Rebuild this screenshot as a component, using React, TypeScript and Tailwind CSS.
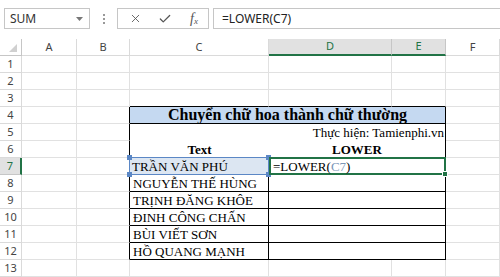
import { X, Check } from "lucide-react";

const cols = ["A", "B", "C", "D", "E", "F"];
const names = ["NGUYỄN THẾ HÙNG", "TRỊNH ĐĂNG KHÔE", "ĐINH CÔNG CHẤN", "BÙI VIẾT SƠN", "HỒ QUANG MẠNH"];

const serif = { fontFamily: '"Liberation Serif", "Times New Roman", serif' };

function RowHead({ n, active }: { n: number; active?: boolean }) {
  return (
    <div
      className={
        active
          ? "flex items-center justify-center bg-[#e1e1e1] text-[#217346] border-b border-[#c6c6c6] border-r-2 border-r-[#217346] text-[11px]"
          : "flex items-center justify-center text-[#444] border-b border-r border-[#dadada] text-[11px]"
      }
    >
      {n}
    </div>
  );
}

function G({ className = "" }: { className?: string }) {
  return <div className={"border-b border-r border-[#e1e1e1] " + className} />;
}

function Handle({ className }: { className: string }) {
  return <div className={"absolute w-[5px] h-[5px] " + className} />;
}

export default function App() {
  return (
    <div
      className="w-[500px] h-[277px] overflow-hidden bg-white text-black"
      style={{ fontFamily: '"Noto Sans", "Open Sans", sans-serif' }}
    >
      {/* formula bar */}
      <div className="flex items-start pt-[8px] pl-[4px] h-[39px]">
        <div className="w-[86px] h-[21px] border border-[#c6c6c6] flex items-center justify-between pl-[5px] pr-[6px] text-[12px] text-[#333]">
          <span>SUM</span>
          <svg width="7" height="4" viewBox="0 0 7 4">
            <path d="M0 0 L7 0 L3.5 4 Z" fill="#777" />
          </svg>
        </div>
        <div className="w-[27px] h-[21px] flex flex-col items-center justify-center gap-[2px]">
          <div className="w-[2px] h-[2px] bg-[#999]" />
          <div className="w-[2px] h-[2px] bg-[#999]" />
          <div className="w-[2px] h-[2px] bg-[#999]" />
        </div>
        <div className="w-[92px] h-[21px] border border-[#c6c6c6] flex items-center text-[#555]">
          <div className="w-[30px] flex justify-center ml-[2px]">
            <X size={13} strokeWidth={1.6} />
          </div>
          <div className="w-[30px] flex justify-center">
            <Check size={14} strokeWidth={2.2} />
          </div>
          <div className="w-[28px] flex justify-center items-end" style={serif}>
            <span className="italic text-[14px] leading-none">f</span>
            <span className="italic text-[9px] leading-none">x</span>
          </div>
        </div>
        <div className="ml-[4px] flex-1 h-[21px] border border-r-0 border-[#c6c6c6] flex items-center pl-[8px] text-[12px] text-[#222]">
          =LOWER(C7)
        </div>
      </div>

      {/* sheet */}
      <div className="grid grid-cols-[22px_55px_53px_139px_123px_54px_54px] auto-rows-[17px]">
        {/* header */}
        <div className="relative border-b border-r border-[#c6c6c6]">
          <svg className="absolute right-[4px] bottom-[3px]" width="8" height="8" viewBox="0 0 8 8">
            <path d="M8 0 L8 8 L0 8 Z" fill="#d0d0d0" />
          </svg>
        </div>
        {cols.map((c) => {
          const sel = c === "D" || c === "E";
          return (
            <div
              key={c}
              className={
                sel
                  ? "flex items-center justify-center bg-[#e1e1e1] text-[#217346] border-r border-[#c6c6c6] border-b-2 border-b-[#217346] text-[11px]"
                  : "flex items-center justify-center text-[#444] border-r border-b border-[#dadada] text-[11px]"
              }
            >
              {c}
            </div>
          );
        })}

        {/* rows 1-2 */}
        {[1, 2].map((r) => (
          <div key={r} className="contents">
            <RowHead n={r} />
            <G />
            <G />
            <G />
            <G />
            <G />
            <G />
          </div>
        ))}

        {/* row 3 */}
        <RowHead n={3} />
        <G />
        <G />
        <div className="border-r border-[#e1e1e1] border-b border-b-black" />
        <div className="border-r border-[#e1e1e1] border-b border-b-black" />
        <div className="border-r border-[#e1e1e1] border-b border-b-black" />
        <G />

        {/* row 4 title */}
        <RowHead n={4} />
        <G />
        <G className="border-r-black" />
        <div
          className="col-span-3 bg-[#c5d9f1] border-b border-r border-black flex items-center justify-center font-bold text-[16px] leading-none"
          style={serif}
        >
          Chuyển chữ hoa thành chữ thường
        </div>
        <G />

        {/* row 5 */}
        <RowHead n={5} />
        <G />
        <G className="border-r-black" />
        <div
          className="col-span-3 border-r border-black flex items-center justify-end pr-[1px] text-[13px] leading-none"
          style={serif}
        >
          Thực hiện: Tamienphi.vn
        </div>
        <G />

        {/* row 6 */}
        <RowHead n={6} />
        <G />
        <G className="border-r-black" />
        <div className="border-b border-black flex items-center justify-center font-bold text-[13px] leading-none" style={serif}>
          Text
        </div>
        <div
          className="col-span-2 border-b border-r border-black flex items-center justify-center font-bold text-[13px] leading-none"
          style={serif}
        >
          LOWER
        </div>
        <G />

        {/* row 7 */}
        <RowHead n={7} active />
        <G />
        <G className="border-r-black" />
        <div
          className="relative bg-[#dce6f2] border border-[#5b87c5] flex items-center pl-[2px] text-[13px] leading-none -mt-px -ml-px"
          style={serif}
        >
          TRẦN VĂN PHÚ
          <Handle className="bg-[#5b87c5] -left-[3px] -top-[3px]" />
          <Handle className="bg-[#5b87c5] -right-[3px] -top-[3px]" />
          <Handle className="bg-[#5b87c5] -left-[3px] -bottom-[3px]" />
          <Handle className="bg-[#5b87c5] -right-[3px] -bottom-[3px]" />
        </div>
        <div
          className="relative col-span-2 border-2 border-[#217346] flex items-center pl-[2px] text-[13px] leading-none -mt-px"
          style={serif}
        >
          <span>
            =LOWER(<span className="text-[#7b96b8]">C7</span>)
          </span>
          <Handle className="bg-[#217346] border border-white -right-[4px] -bottom-[4px] w-[6px] h-[6px]" />
        </div>
        <G />

        {/* rows 8-12 */}
        {names.map((n, i) => (
          <div key={n} className="contents">
            <RowHead n={8 + i} />
            <G />
            <G className="border-r-black" />
            <div
              className="border-b border-r border-black flex items-center pl-[3px] text-[13px] leading-none whitespace-nowrap overflow-visible"
              style={serif}
            >
              {n}
            </div>
            <div className="col-span-2 border-b border-r border-black" />
            <G />
          </div>
        ))}

        {/* row 13 */}
        <RowHead n={13} />
        <G />
        <G />
        <G />
        <G />
        <G />
        <G />
      </div>
    </div>
  );
}
